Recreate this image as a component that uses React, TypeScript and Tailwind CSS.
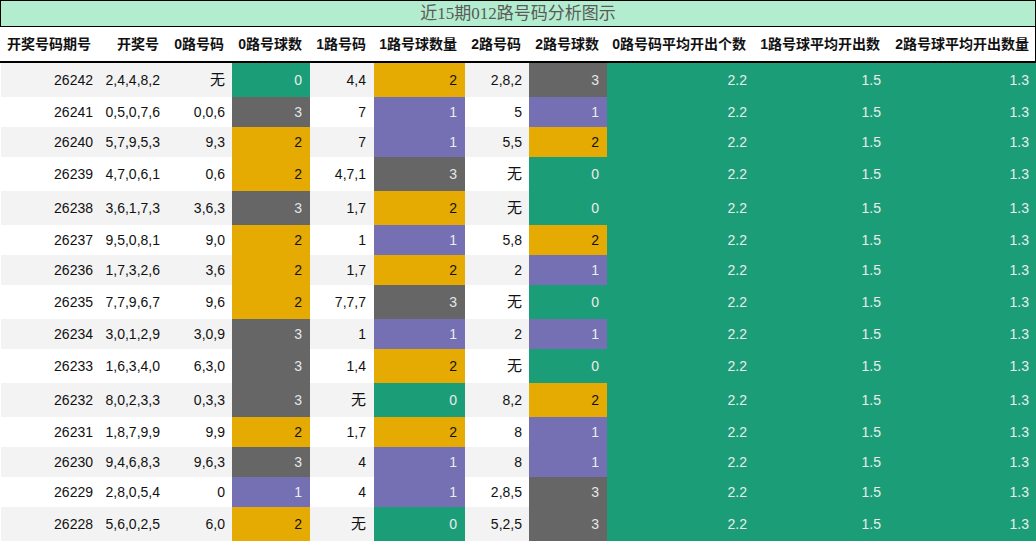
const widths = ["w-[100px]", "w-[66px]", "w-[65px]", "w-[78px]", "w-[64px]", "w-[91px]", "w-[64px]", "w-[78px]", "w-[147px]", "w-[134px]", "w-[149px]"]

const headers = [
  "开奖号码期号",
  "开奖号",
  "0路号码",
  "0路号球数",
  "1路号码",
  "1路号球数量",
  "2路号码",
  "2路号球数",
  "0路号码平均开出个数",
  "1路号球平均开出数",
  "2路号球平均开出数量",
]

// issue, draw, r0 nums, r0 count, r1 nums, r1 count, r2 nums, r2 count
const rows: [string, string, string, number, string, number, string, number][] = [
  ["26242", "2,4,4,8,2", "无", 0, "4,4", 2, "2,8,2", 3],
  ["26241", "0,5,0,7,6", "0,0,6", 3, "7", 1, "5", 1],
  ["26240", "5,7,9,5,3", "9,3", 2, "7", 1, "5,5", 2],
  ["26239", "4,7,0,6,1", "0,6", 2, "4,7,1", 3, "无", 0],
  ["26238", "3,6,1,7,3", "3,6,3", 3, "1,7", 2, "无", 0],
  ["26237", "9,5,0,8,1", "9,0", 2, "1", 1, "5,8", 2],
  ["26236", "1,7,3,2,6", "3,6", 2, "1,7", 2, "2", 1],
  ["26235", "7,7,9,6,7", "9,6", 2, "7,7,7", 3, "无", 0],
  ["26234", "3,0,1,2,9", "3,0,9", 3, "1", 1, "2", 1],
  ["26233", "1,6,3,4,0", "6,3,0", 3, "1,4", 2, "无", 0],
  ["26232", "8,0,2,3,3", "0,3,3", 3, "无", 0, "8,2", 2],
  ["26231", "1,8,7,9,9", "9,9", 2, "1,7", 2, "8", 1],
  ["26230", "9,4,6,8,3", "9,6,3", 3, "4", 1, "8", 1],
  ["26229", "2,8,0,5,4", "0", 1, "4", 1, "2,8,5", 3],
  ["26228", "5,6,0,2,5", "6,0", 2, "无", 0, "5,2,5", 3],
]

const countStyle: Record<number, string> = {
  0: "bg-[#1b9e77] text-[#ececec]",
  1: "bg-[#7570b3] text-[#ececec]",
  2: "bg-[#e6ab02] text-[#111111]",
  3: "bg-[#666666] text-[#e6e6e6]",
}

function Cell({ i, children, className = "" }: { i: number; children: React.ReactNode; className?: string }) {
  return (
    <div className={`${widths[i]} shrink-0 flex items-center justify-end pr-[7px] ${className}`}>
      {children}
    </div>
  )
}

export default function App() {
  return (
    <div
      className="w-[1036px] h-[542px] overflow-hidden bg-white text-[#111111]"
      style={{ fontFamily: '"Liberation Sans", "Noto Sans CJK SC", sans-serif' }}
    >
      {/* Title */}
      <div
        className="h-[27px] border border-black bg-[#b3edcf] flex items-center justify-center text-[17px] text-[#5a5a5a]"
        style={{ fontFamily: '"Liberation Serif", "Noto Sans CJK SC", serif' }}
      >
        近15期012路号码分析图示
      </div>

      {/* Header */}
      <div className="flex h-[36px] border-b-2 border-black border-r border-r-black font-bold text-[14px]">
        {headers.map((h, i) => (
          <Cell key={h} i={i} className={i === 0 ? "pr-[9px]" : ""}>
            {h}
          </Cell>
        ))}
      </div>

      {/* Body */}
      <div className="flex flex-col text-[14px] pl-px">
        {rows.map((r, idx) => {
          const tall = r.includes("无")
          const bg = idx % 2 === 0 ? "bg-[#f3f3f3]" : "bg-white"
          return (
            <div key={r[0]} className={`flex ${tall ? "h-[34px]" : "h-[30px]"} ${bg}`}>
              <Cell i={0} className="w-[99px] pr-[8px]">{r[0]}</Cell>
              <Cell i={1} className="pr-[6px]">{r[1]}</Cell>
              <Cell i={2} className={r[2] === "无" ? "text-[15px]" : ""}>{r[2]}</Cell>
              <Cell i={3} className={`pr-[8px] ${countStyle[r[3]]}`}>{r[3]}</Cell>
              <Cell i={4} className={`pr-[8px] ${r[4] === "无" ? "text-[15px]" : ""}`}>{r[4]}</Cell>
              <Cell i={5} className={`pr-[8px] ${countStyle[r[5]]}`}>{r[5]}</Cell>
              <Cell i={6} className={r[6] === "无" ? "text-[15px]" : ""}>{r[6]}</Cell>
              <Cell i={7} className={`pr-[8px] ${countStyle[r[7]]}`}>{r[7]}</Cell>
              <Cell i={8} className="bg-[#1b9e77] text-[#ececec]">2.2</Cell>
              <Cell i={9} className="bg-[#1b9e77] text-[#ececec]">1.5</Cell>
              <Cell i={10} className="bg-[#1b9e77] text-[#ececec] pr-[8px]">1.3</Cell>
            </div>
          )
        })}
      </div>
    </div>
  )
}
